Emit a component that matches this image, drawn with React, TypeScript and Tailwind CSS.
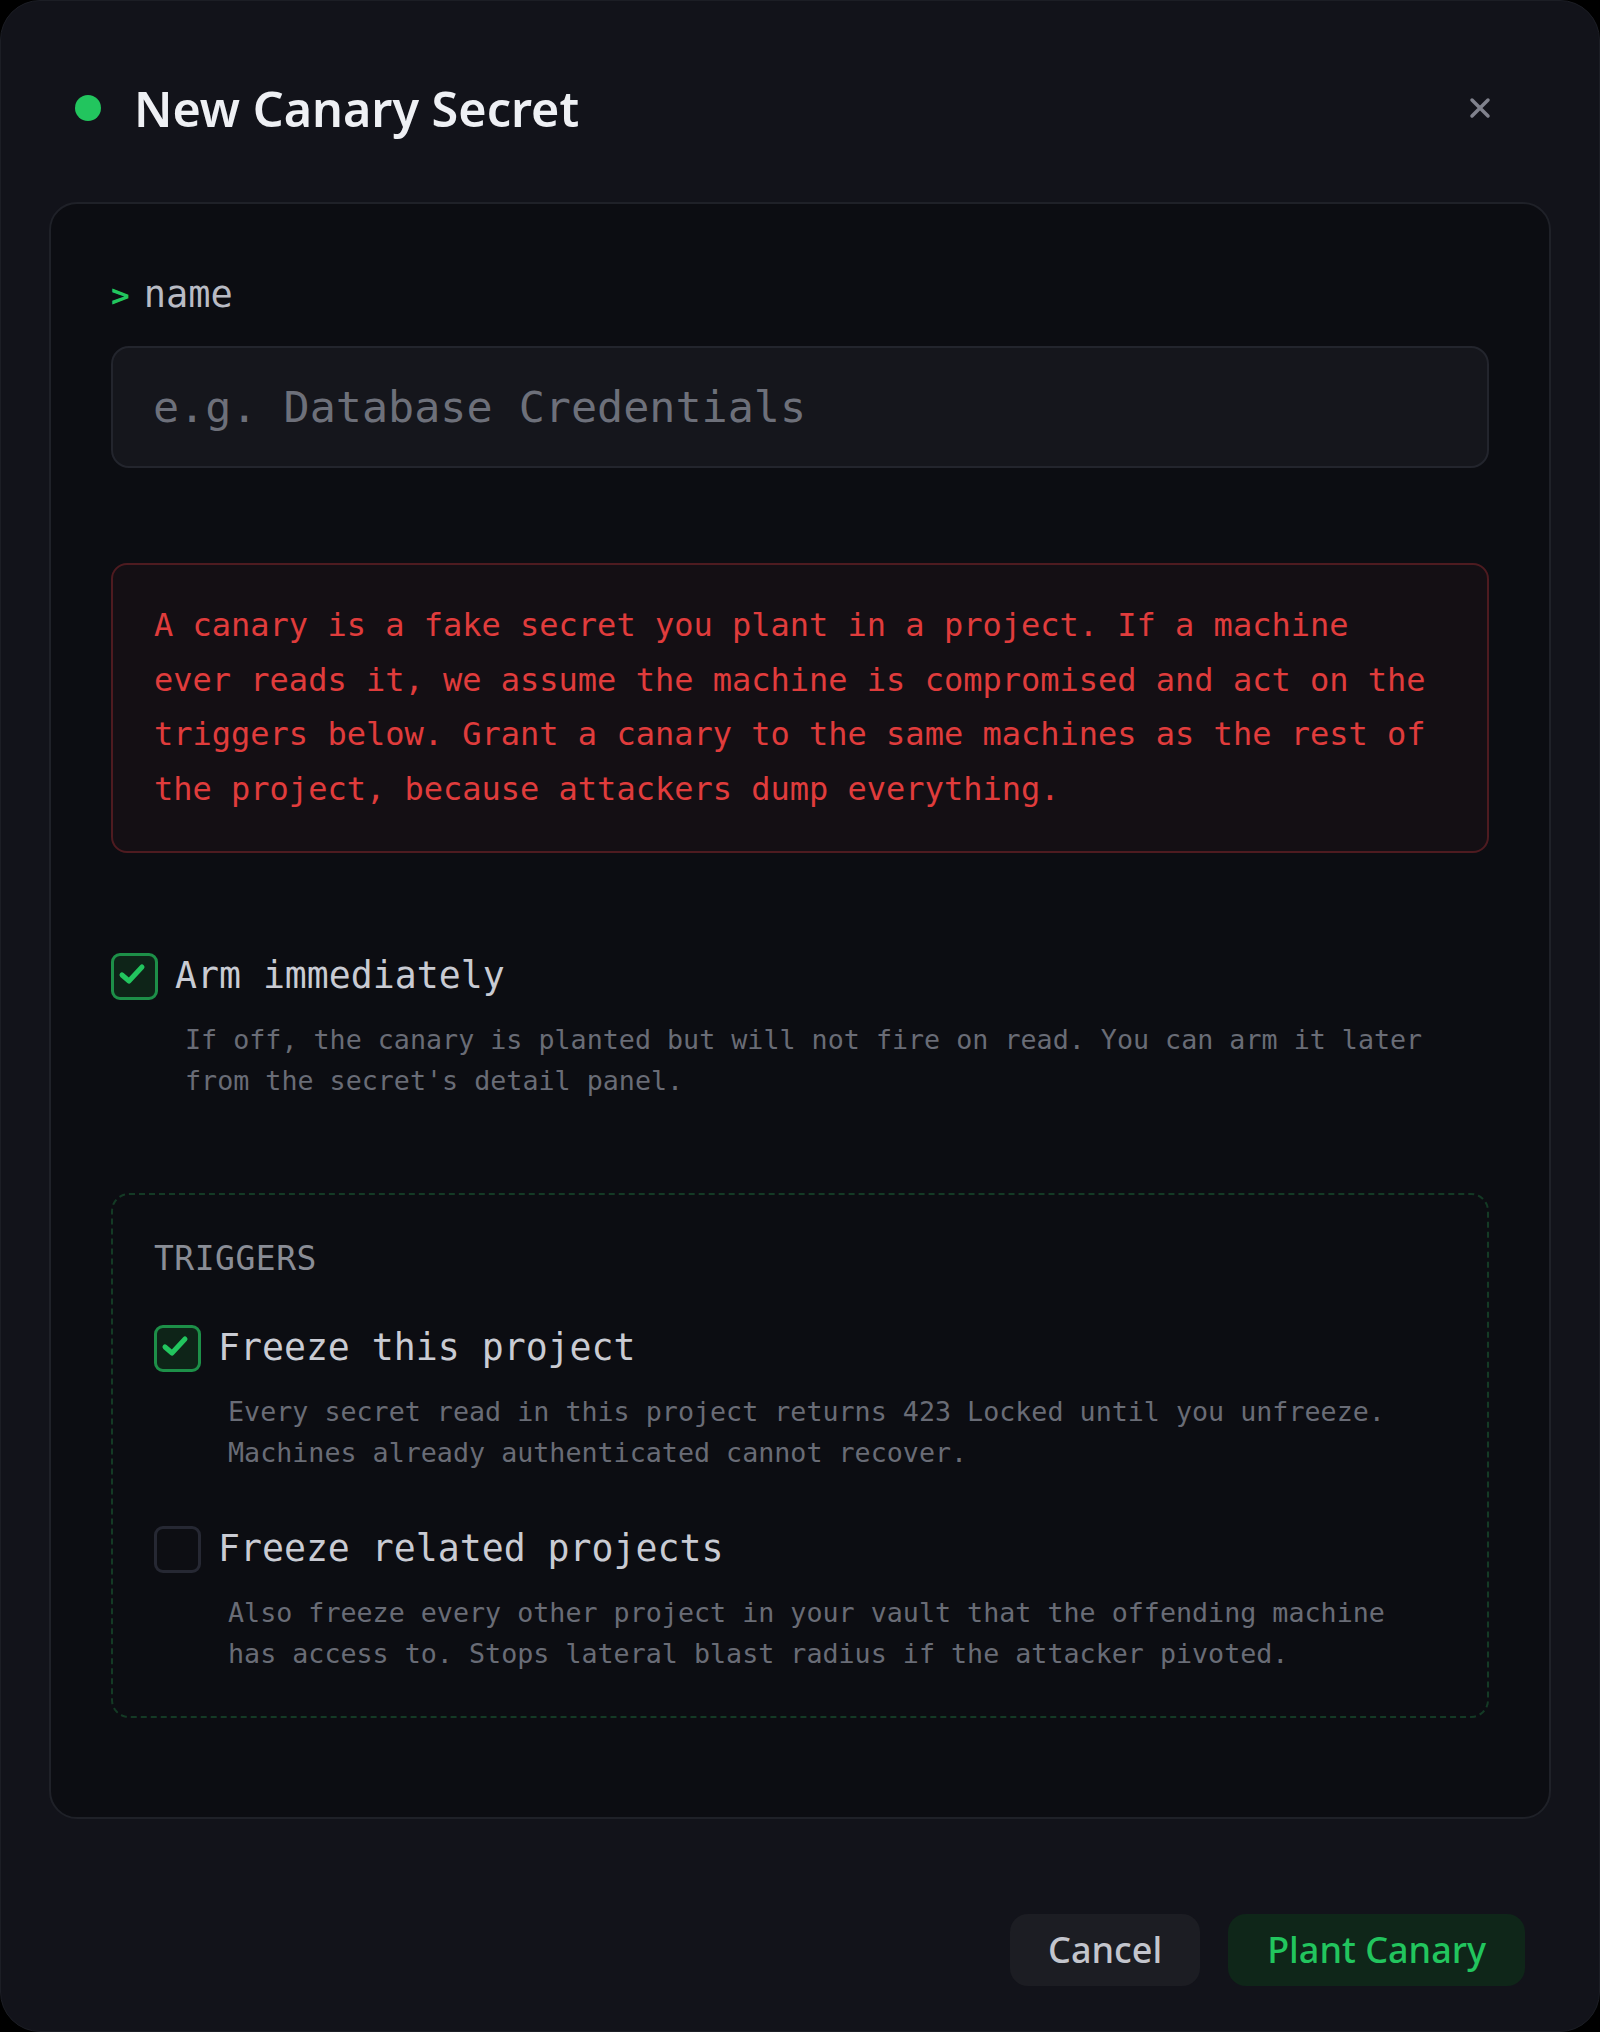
import React from 'react'

const mono = "font-['DejaVu_Sans_Mono','Liberation_Mono',monospace]"
const sans = "font-['Noto_Sans','Open_Sans',sans-serif]"

const Check = ({ checked }: { checked: boolean }) => (
  <span
    className={
      checked
        ? 'flex h-[47px] w-[47px] shrink-0 items-center justify-center rounded-[9px] border-[3px] border-[#1d8f48] bg-[#0e2418]'
        : 'flex h-[47px] w-[47px] shrink-0 items-center justify-center rounded-[9px] border-[3px] border-[#262833] bg-[#0d0e13]'
    }
  >
    {checked && (
      <svg width="28" height="24" viewBox="0 0 28 24" className="-mt-[5px] -ml-[5px]">
        <path d="M4 13 L11 19 L24 5" fill="none" stroke="#22c55e" strokeWidth="5" strokeLinecap="round" strokeLinejoin="round" />
      </svg>
    )}
  </span>
)

const Option = ({ checked, label, children }: { checked: boolean; label: string; children: React.ReactNode }) => (
  <div className="flex flex-col">
    <label className="flex h-[48px] items-center gap-[17px]">
      <Check checked={checked} />
      <span className={`${mono} text-[36.5px] leading-none text-[#c9cbd3]`}>{label}</span>
    </label>
    <p className={`${mono} ml-[74px] mt-[20px] text-[26.7px] leading-[40.5px] text-[#696c76]`}>{children}</p>
  </div>
)

const App = () => {
  return (
    <div className="min-h-[2032px] bg-black">
      <div className="flex h-[2032px] w-full flex-col rounded-[40px] border border-[#1c1e25] bg-[#12131a] px-[48px]">
        {/* header */}
        <div className="mt-[77px] flex h-[60px] items-center">
          <span className="ml-[26px] h-[26px] w-[26px] rounded-full bg-[#22c55e]" />
          <h2 className={`${sans} ml-[33px] text-[48.5px] font-semibold leading-none text-[#eef0f4]`}>New Canary Secret</h2>
          <button className="ml-auto mr-[58px] text-[#80828d]">
            <svg width="26" height="26" viewBox="0 0 26 26">
              <path d="M5 5 L21 21 M21 5 L5 21" stroke="currentColor" strokeWidth="3.5" strokeLinecap="round" />
            </svg>
          </button>
        </div>

        {/* form card */}
        <div className="mt-[64px] rounded-[28px] border-2 border-[#1f2128] bg-[#0c0d12] px-[60px] pb-[99px] pt-[69px]">
          <div className={`${mono} flex h-[44px] items-center gap-[14px] text-[37px]`}>
            <span className="text-[31px] font-bold text-[#22c55e]">&gt;</span>
            <span className="text-[#b9bbc4]">name</span>
          </div>
          <input
            placeholder="e.g. Database Credentials"
            className={`${mono} mt-[29px] h-[122px] w-full rounded-[18px] border-2 border-[#23252d] bg-[#15161c] px-[40px] text-[43.4px] text-[#c9cbd3] outline-none placeholder:text-[#6d707a]`}
          />

          <div className={`${mono} mt-[95px] rounded-[16px] border-2 border-[#4e1b20] bg-[#140f14] px-[41px] pb-[35px] pt-[33px] text-[32px] leading-[54.5px] text-[#e03c3c]`}>
            A canary is a fake secret you plant in a project. If a machine
            <br />
            ever reads it, we assume the machine is compromised and act on the
            <br />
            triggers below. Grant a canary to the same machines as the rest of
            <br />
            the project, because attackers dump everything.
          </div>

          <div className="mt-[99px]">
            <Option checked label="Arm immediately">
              If off, the canary is planted but will not fire on read. You can arm it later
              <br />
              from the secret's detail panel.
            </Option>
          </div>

          {/* triggers */}
          <div className="mt-[92px] rounded-[18px] border-2 border-dashed border-[#143a25] px-[41px] pb-[42px] pt-[44px]">
            <div className={`${mono} text-[33px] leading-[40px] tracking-[0.5px] text-[#8a8d96]`}>TRIGGERS</div>
            <div className="mt-[45px]">
              <Option checked label="Freeze this project">
                Every secret read in this project returns 423 Locked until you unfreeze.
                <br />
                Machines already authenticated cannot recover.
              </Option>
            </div>
            <div className="mt-[52px]">
              <Option checked={false} label="Freeze related projects">
                Also freeze every other project in your vault that the offending machine
                <br />
                has access to. Stops lateral blast radius if the attacker pivoted.
              </Option>
            </div>
          </div>
        </div>

        {/* footer */}
        <div className={`${sans} mt-[95px] flex justify-end gap-[28px] pr-[26px]`}>
          <button className="h-[72px] rounded-[18px] bg-[#1c1d23] px-[38px] text-[36px] font-medium text-[#c3c5cd]">Cancel</button>
          <button className="h-[72px] rounded-[18px] bg-[#0f2619] px-[39px] text-[36px] font-medium text-[#22c55e]">Plant Canary</button>
        </div>
      </div>
    </div>
  )
}

export default App
